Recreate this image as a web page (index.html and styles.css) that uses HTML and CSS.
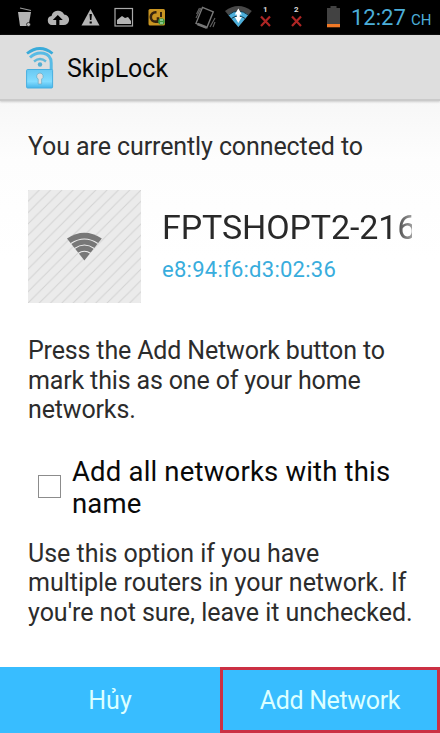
FILE: index.html
```html
<!DOCTYPE html>
<html lang="vi">
<head>
<meta charset="utf-8">
<title>SkipLock</title>
<link rel="stylesheet" href="styles.css">
</head>
<body>
<div class="screen">
  <header class="status">
    <svg class="status-icons" width="340" height="35" viewBox="0 0 340 35" aria-hidden="true">
      <g fill="#b4b4b4">
        <path d="M18 12h13l-2.500 14h-8.500z"/>
        <path d="M20 8l11 2.500" stroke="#999" stroke-width="1.200"/>
        <circle cx="28.500" cy="24.500" r="2" stroke="#000" stroke-width=".6"/>
        <path d="M52 25a4.600 4.600 0 0 1-.5-9.100 6.800 6.800 0 0 1 12.600-1.500A5.300 5.300 0 0 1 63.500 25z"/>
        <path d="M90.500 9l9 16.500h-18z"/>
        <path d="M117 24v-4l5-4 3 2 3-1 3 4v3z"/>
      </g>
      <path d="M57.800 15l-5 5h3.400v5h3.200v-5h3.400z" fill="#000"/>
      <path d="M89.500 14h2.400l-.5 6h-1.400zM89.600 21.500h2.200v2h-2.200z" fill="#000"/>
      <rect x="115" y="8.500" width="17.500" height="17.500" fill="none" stroke="#aaa" stroke-width="1.200"/>
      <rect x="148.500" y="9" width="16.500" height="16.500" rx="1.500" fill="#c99522"/>
      <path d="M156.500 12.200h-1a4.700 4.700 0 0 0 0 9.400h2.500v-4.300" fill="none" stroke="#36240e" stroke-width="2.600"/>
      <path d="M161 12v5" stroke="#36240e" stroke-width="2"/>
      <circle cx="161.500" cy="21.500" r="3.300" fill="#3d9b42"/>
      <path d="M160 20h3M160 23h3" stroke="#d5edce"/>
      <g fill="none" stroke="#777" stroke-width="1.100">
        <path d="M202.500 7.300l10.800 4.500-6.500 16-10.800-4.500z" stroke-width="1.400"/>
        <path d="M197.500 24l9 3.500" stroke-width="2.500"/>
        <path d="M196.500 14l3-6M196 18l5-10M210 27l5-9M213 27l2-5" stroke="#626262"/>
      </g>
      <path d="M238.300 27L225 11Q238.300 1 251.800 11z" fill="#484848"/>
      <path d="M238.300 27L228.500 15Q238.300 7 248.200 15z" fill="#4baeda"/>
      <g fill="none" stroke="#173846" stroke-width="1">
        <path d="M228.500 15q9.800-8 19.700 0M231.500 18.500q6.800-5 13.600 0"/>
      </g>
      <path d="M238.300 8.500l3.500 6h-7zM234.800 17h7l-3.500 6z" fill="#fff"/>
      <path d="M238.300 13v6" stroke="#fff" stroke-width="3"/>
      <g stroke="#ae2524" stroke-width="2.200">
        <path d="M261 16.500l9 9.500M270 16.500l-9 9.500M292 16.500l9 9.500M301 16.500l-9 9.500"/>
      </g>
      <g class="sim"><text x="263" y="12">1</text><text x="294" y="12">2</text></g>
      <path d="M327 8h3.500V6h6v2h4v19h-13.500z" fill="#424242"/>
      <path d="M327 24h13.500v3.300H327z" fill="#ef7826"/>
    </svg>
    <span class="clock">12:27</span><span class="period">CH</span>
  </header>

  <div class="appbar">
    <svg width="28" height="43" viewBox="0 0 28 43" aria-hidden="true">
      <defs>
        <linearGradient id="lock" x1="0" y1="0" x2="0" y2="1"><stop offset="0" stop-color="#69c9f2"/><stop offset=".65" stop-color="#82dcff"/><stop offset="1" stop-color="#46b5ea"/></linearGradient>
      </defs>
      <g fill="none" stroke="#58bbe5">
        <path d="M1 6.500Q14-3.500 26.500 6.500" stroke="#39abda" stroke-width="2.800"/>
        <path d="M4 10.500C12 3 25.200 5 25.200 16v7" stroke-width="3"/>
        <path d="M8 14.500q6-5 12 0" stroke="#60b9db" stroke-width="2.300"/>
      </g>
      <circle cx="14" cy="17.500" r="2.200" fill="#55aed2"/>
      <rect x=".6" y="22.500" width="26" height="18.500" rx="1" fill="url(#lock)" stroke="#47afe0"/>
      <path d="M14 26a3.300 3.300 0 0 1 1.600 6.100V37h-3.400v-4.900A3.300 3.300 0 0 1 14 26z" fill="#dedede" stroke="#68aac5" stroke-width=".7"/>
    </svg>
    <h1>SkipLock</h1>
  </div>

  <main class="content">
    <p class="copy intro">You are currently connected to</p>
    <section class="network">
      <div class="tile">
        <svg width="113" height="113" viewBox="0 0 113 113" aria-hidden="true">
          <defs>
            <pattern id="hatch" width="11.300" height="11.300" patternUnits="userSpaceOnUse"><path d="M-1 12.300L12.300-1M-1 1L1-1M10.300 12.300l2-2" stroke="#d3d3d3" stroke-width="1"/></pattern>
          </defs>
          <rect width="113" height="113" fill="#ebebeb"/>
          <rect width="113" height="113" fill="url(#hatch)"/>
          <path d="M56.400 70.500L39 48.500Q56.400 37 73.800 48.500z" fill="#777"/>
          <g fill="none" stroke="#ededed" stroke-width="1.100">
            <path d="M43 53.500q13.400-9 26.800 0M46.500 58.500q9.900-7 19.800 0M50 63.500q6.400-4.500 12.800 0"/>
          </g>
        </svg>
      </div>
      <div class="details">
        <div class="ssid">FPTSHOPT2-216</div>
        <div class="mac">e8:94:f6:d3:02:36</div>
      </div>
    </section>
    <p class="copy prompt">Press the Add Network button to<br>mark this as one of your home<br>networks.</p>
    <div class="option">
      <span class="box"></span>
      <span class="label">Add all networks with this<br>name</span>
    </div>
    <p class="copy hint">Use this option if you have<br>multiple routers in your network. If<br>you're not sure, leave it unchecked.</p>
  </main>

  <footer class="actions">
    <div class="action cancel">Hủy</div>
    <div class="action add">Add Network</div>
  </footer>
</div>
</body>
</html>
```
FILE: styles.css
```css
* { box-sizing: border-box; }
body { margin: 0; font-family: Roboto, sans-serif; background: #fff; }
p, h1 { margin: 0; font-weight: 400; }
.screen { width: 440px; height: 733px; display: flex; flex-direction: column; overflow: hidden; background: linear-gradient(#f7f7f7 100px, #fdfdfd 160px, #fff 260px); }
.status { height: 35px; flex: none; display: flex; align-items: baseline; background: #000; color: #4caed9; white-space: nowrap; }
.status-icons { flex: none; align-self: flex-start; }
.sim text { fill: #ddd; font: 700 8px Roboto, sans-serif; }
.clock { width: 71px; padding-left: 11px; font-size: 22px; line-height: 36px; }
.period { font-size: 15px; }
.appbar { height: 66px; flex: none; display: flex; align-items: center; gap: 13px; padding: 2px 26px 0; background: #dedede; border-bottom: 2px solid #cacaca; box-shadow: 0 1px 2px #ccc; }
h1 { font-size: 25px; line-height: 30px; padding-top: 2px; color: #080808; }
.content { flex: 1; padding: 31px 27px 0 28px; }
.copy { font-size: 25px; line-height: 29.300px; color: #2c2c2c; white-space: nowrap; letter-spacing: -.1px; }
.network { display: flex; gap: 21px; margin-top: 29px; }
.tile { width: 113px; height: 113px; flex: none; }
.tile svg { display: block; }
.details { width: 250px; min-width: 0; padding-top: 17px; }
.ssid { font-size: 34px; line-height: 40px; letter-spacing: -.1px; color: #292929; white-space: nowrap; overflow: hidden; mask-image: linear-gradient(90deg, #000 230px, rgba(0,0,0,.45) 250px); }
.mac { margin-top: 10px; font-size: 22px; line-height: 26px; letter-spacing: .26px; color: #38addd; }
.prompt { margin-top: 33px; letter-spacing: -.15px; }
.option { display: flex; align-items: center; margin-top: 32px; padding-left: 10px; }
.box { width: 23px; height: 23px; border: 1px solid #8c8c8c; flex: none; margin: 0 11px 3px 0; }
.label { font-size: 27.500px; line-height: 32px; letter-spacing: .18px; color: #090909; white-space: nowrap; }
.hint { margin-top: 19px; letter-spacing: -.02px; }
.actions { height: 66px; flex: none; display: grid; grid-template-columns: 1fr 1fr; background: #38bdff; color: #dcffff; }
.action { display: flex; align-items: center; justify-content: center; font-size: 25px; padding-top: 1px; }
.add { border: 3px solid #cb3043; letter-spacing: -.35px; }
```
